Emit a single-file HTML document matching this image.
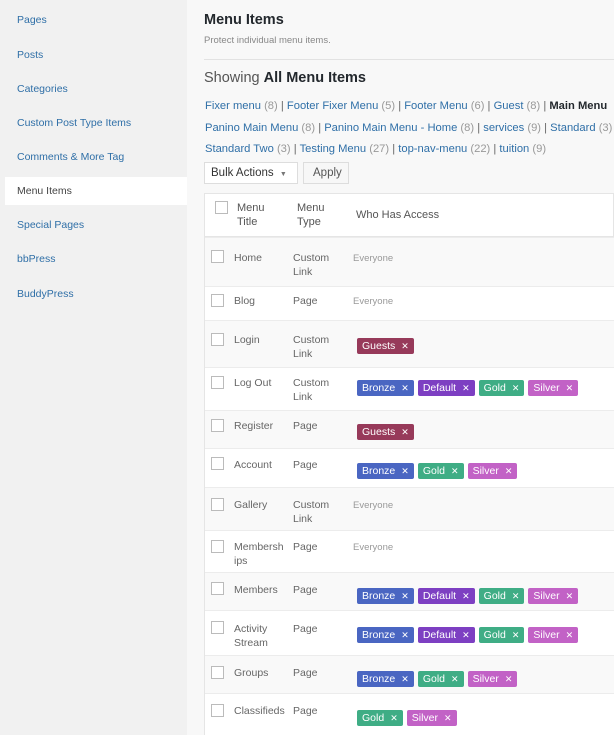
<!DOCTYPE html>
<html><head><meta charset="utf-8"><style>
*{margin:0;padding:0;box-sizing:border-box}
body{width:614px;height:735px;overflow:hidden;background:#f1f1f1;font-family:"Liberation Sans",sans-serif;position:relative;color:#555}
.a{position:absolute;white-space:nowrap}
.side{font-size:10.5px;color:#2f6fa7;left:17px}
.main{position:absolute;left:187px;top:0;width:427px;height:735px;background:#f8f8f8}
.lk{color:#2f6fa7}.ct{color:#999}
.row{position:absolute;left:204px;width:410px;border-top:1px solid #ececec}
.cb{position:absolute;left:7px;width:13px;height:13px;border:1px solid #bbb;background:#fff}
.c{position:absolute;font-size:10.5px;line-height:14px;color:#666}
.ev{position:absolute;left:149px;font-size:9.5px;color:#999}
.tg{display:inline-block;height:16px;line-height:16px;font-size:10.5px;color:#fff;padding:0 5px;margin-right:4px;border-radius:2px}
.tg b{font-weight:normal;margin-left:6px;font-size:9px}
.br{background:#4a66c2}.de{background:#7d3fc2}.go{background:#3fad85}.si{background:#c262c6}.gu{background:#973a5a}
.tags{position:absolute;left:153px}
</style></head><body>
<div class="a side" style="top:14px">Pages</div>
<div class="a side" style="top:49px">Posts</div>
<div class="a side" style="top:83px">Categories</div>
<div class="a side" style="top:117px">Custom Post Type Items</div>
<div class="a side" style="top:151px">Comments &amp; More Tag</div>
<div class="a" style="left:5px;top:177px;width:182px;height:28px;background:#fff"></div>
<div class="a side" style="top:185px;color:#444">Menu Items</div>
<div class="a side" style="top:219px">Special Pages</div>
<div class="a side" style="top:253px">bbPress</div>
<div class="a side" style="top:288px">BuddyPress</div>
<div class="main"></div>
<div class="a" style="left:204px;top:12px;font-size:14.5px;font-weight:bold;color:#23282d">Menu Items</div>
<div class="a" style="left:204px;top:35px;font-size:9.5px;color:#888">Protect individual menu items.</div>
<div class="a" style="left:204px;top:59px;width:410px;height:1px;background:#e2e2e2"></div>
<div class="a" style="left:204px;top:70px;font-size:14.5px;color:#555">Showing <b style="color:#23282d">All Menu Items</b></div>
<div class="a" style="left:205px;top:100px;font-size:11.2px;color:#666"><span class="lk">Fixer menu</span> <span class="ct">(8)</span> | <span class="lk">Footer Fixer Menu</span> <span class="ct">(5)</span> | <span class="lk">Footer Menu</span> <span class="ct">(6)</span> | <span class="lk">Guest</span> <span class="ct">(8)</span> | <b style="color:#23282d">Main Menu</b></div>
<div class="a" style="left:205px;top:122px;font-size:11.2px;color:#666"><span class="lk">Panino Main Menu</span> <span class="ct">(8)</span> | <span class="lk">Panino Main Menu - Home</span> <span class="ct">(8)</span> | <span class="lk">services</span> <span class="ct">(9)</span> | <span class="lk">Standard</span> <span class="ct">(3)</span></div>
<div class="a" style="left:205px;top:143px;font-size:11.2px;color:#666"><span class="lk">Standard Two</span> <span class="ct">(3)</span> | <span class="lk">Testing Menu</span> <span class="ct">(27)</span> | <span class="lk">top-nav-menu</span> <span class="ct">(22)</span> | <span class="lk">tuition</span> <span class="ct">(9)</span></div>
<div class="a" style="left:204px;top:162px;width:94px;height:22px;border:1px solid #ddd;background:#fff;font-size:11.5px;color:#333;padding:4px 6px">Bulk Actions <span style="font-size:7px;color:#777;margin-left:3px">▼</span></div>
<div class="a" style="left:303px;top:162px;width:46px;height:22px;border:1px solid #ddd;background:#f7f7f7;font-size:11.5px;color:#555;padding:4px 9px">Apply</div>
<div class="row" style="top:193px;height:44px;background:#fff;border:1px solid #e5e5e5">
<div class="cb" style="left:10px;top:7px"></div>
<div class="c" style="left:32px;top:7px;font-size:11px;color:#555">Menu<br>Title</div>
<div class="c" style="left:92px;top:7px;font-size:11px;color:#555">Menu<br>Type</div>
<div class="c" style="left:151px;top:14px;font-size:11px;color:#555">Who Has Access</div></div>

<div class="row" style="top:237px;height:49px;background:#f9f9f9"><div class="cb" style="top:12px"></div><div class="c" style="left:30px;top:13px">Home</div><div class="c" style="left:89px;top:13px">Custom<br>Link</div><div class="ev" style="top:15px">Everyone</div></div>
<div class="row" style="top:286px;height:34px;background:#fff"><div class="cb" style="top:7px"></div><div class="c" style="left:30px;top:7px">Blog</div><div class="c" style="left:89px;top:7px">Page</div><div class="ev" style="top:9px">Everyone</div></div>
<div class="row" style="top:320px;height:47px;background:#f9f9f9"><div class="cb" style="top:12px"></div><div class="c" style="left:30px;top:12px">Login</div><div class="c" style="left:89px;top:12px">Custom<br>Link</div><div class="tags" style="top:15px"><span class="tg gu">Guests<b>✕</b></span></div></div>
<div class="row" style="top:367px;height:43px;background:#fff"><div class="cb" style="top:8px"></div><div class="c" style="left:30px;top:8px">Log Out</div><div class="c" style="left:89px;top:8px">Custom<br>Link</div><div class="tags" style="top:10px"><span class="tg br">Bronze<b>✕</b></span><span class="tg de">Default<b>✕</b></span><span class="tg go">Gold<b>✕</b></span><span class="tg si">Silver<b>✕</b></span></div></div>
<div class="row" style="top:410px;height:38px;background:#f9f9f9"><div class="cb" style="top:8px"></div><div class="c" style="left:30px;top:8px">Register</div><div class="c" style="left:89px;top:8px">Page</div><div class="tags" style="top:11px"><span class="tg gu">Guests<b>✕</b></span></div></div>
<div class="row" style="top:448px;height:39px;background:#fff"><div class="cb" style="top:8px"></div><div class="c" style="left:30px;top:9px">Account</div><div class="c" style="left:89px;top:9px">Page</div><div class="tags" style="top:12px"><span class="tg br">Bronze<b>✕</b></span><span class="tg go">Gold<b>✕</b></span><span class="tg si">Silver<b>✕</b></span></div></div>
<div class="row" style="top:487px;height:43px;background:#f9f9f9"><div class="cb" style="top:10px"></div><div class="c" style="left:30px;top:10px">Gallery</div><div class="c" style="left:89px;top:10px">Custom<br>Link</div><div class="ev" style="top:12px">Everyone</div></div>
<div class="row" style="top:530px;height:42px;background:#fff"><div class="cb" style="top:9px"></div><div class="c" style="left:30px;top:9px">Membersh<br>ips</div><div class="c" style="left:89px;top:9px">Page</div><div class="ev" style="top:11px">Everyone</div></div>
<div class="row" style="top:572px;height:38px;background:#f9f9f9"><div class="cb" style="top:9px"></div><div class="c" style="left:30px;top:10px">Members</div><div class="c" style="left:89px;top:10px">Page</div><div class="tags" style="top:13px"><span class="tg br">Bronze<b>✕</b></span><span class="tg de">Default<b>✕</b></span><span class="tg go">Gold<b>✕</b></span><span class="tg si">Silver<b>✕</b></span></div></div>
<div class="row" style="top:610px;height:45px;background:#fff"><div class="cb" style="top:10px"></div><div class="c" style="left:30px;top:11px">Activity<br>Stream</div><div class="c" style="left:89px;top:11px">Page</div><div class="tags" style="top:14px"><span class="tg br">Bronze<b>✕</b></span><span class="tg de">Default<b>✕</b></span><span class="tg go">Gold<b>✕</b></span><span class="tg si">Silver<b>✕</b></span></div></div>
<div class="row" style="top:655px;height:38px;background:#f9f9f9"><div class="cb" style="top:10px"></div><div class="c" style="left:30px;top:10px">Groups</div><div class="c" style="left:89px;top:10px">Page</div><div class="tags" style="top:13px"><span class="tg br">Bronze<b>✕</b></span><span class="tg go">Gold<b>✕</b></span><span class="tg si">Silver<b>✕</b></span></div></div>
<div class="row" style="top:693px;height:42px;background:#fff"><div class="cb" style="top:10px"></div><div class="c" style="left:30px;top:10px">Classifieds</div><div class="c" style="left:89px;top:10px">Page</div><div class="tags" style="top:14px"><span class="tg go">Gold<b>✕</b></span><span class="tg si">Silver<b>✕</b></span></div></div>
<div class="a" style="left:204px;top:237px;width:1px;height:498px;background:#e5e5e5"></div>
</body></html>
